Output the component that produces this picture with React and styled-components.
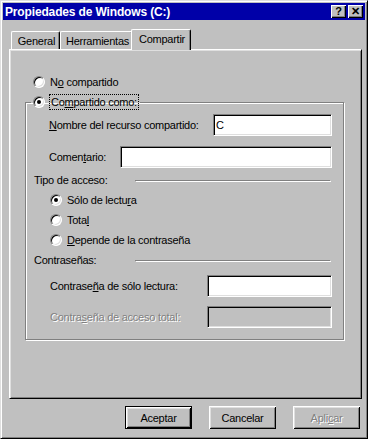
import React from "react";
import styled, { createGlobalStyle } from "styled-components";

const GlobalStyle = createGlobalStyle`
  body {
    margin: 0;
    background: #c0c0c0;
    font-family: "Liberation Sans", Arial, sans-serif;
    font-size: 11px;
    letter-spacing: -0.25px;
    color: #000;
  }
`;

const Window = styled.div`
  width: 368px;
  height: 439px;
  box-sizing: border-box;
  background: #c0c0c0;
  border: 1px solid;
  border-color: #dfdfdf #000 #000 #dfdfdf;
  box-shadow: inset 1px 1px #fff, inset -1px -1px #808080;
  padding: 2px;
  display: flex;
  flex-direction: column;
`;

const TitleBar = styled.div`
  height: 17px;
  background: #0000a8;
  display: flex;
  align-items: center;
  padding: 0 2px 0 2px;
  flex-shrink: 0;
`;

const Title = styled.div`
  flex: 1;
  color: #fff;
  font-weight: bold;
  font-size: 12px;
  letter-spacing: -0.15px;
`;

const CaptionButton = styled.div`
  width: 15px;
  height: 13px;
  box-sizing: border-box;
  background: #c0c0c0;
  box-shadow: inset 1px 1px #fff, inset -1px -1px #000, inset -2px -2px #808080;
  display: flex;
  align-items: center;
  justify-content: center;
  margin-left: ${p => p.gap || 0}px;
  font-weight: bold;
  font-size: 11px;
  letter-spacing: 0;
  line-height: 1;
`;

const Body = styled.div`
  flex: 1;
  display: flex;
  flex-direction: column;
  padding: 9px 3px 7px 6px;
`;

const TabRow = styled.div`
  display: flex;
  align-items: flex-end;
  height: 20px;
  padding-left: 2px;
`;

const Tab = styled.div`
  position: relative;
  z-index: ${p => (p.active ? 1 : 0)};
  width: ${p => p.w}px;
  height: ${p => (p.active ? 21 : 18)}px;
  margin: 0 ${p => (p.active ? -2 : 0)}px ${p => (p.active ? -1 : 0)}px;
  padding: ${p => (p.active ? "0 0 3px 2px" : "0 0 0 2px")};
  box-sizing: border-box;
  background: #c0c0c0;
  border-top: 1px solid #fff;
  border-left: 1px solid #fff;
  border-right: 1px solid #000;
  border-radius: 2px 2px 0 0;
  box-shadow: inset -1px 0 #808080;
  display: flex;
  align-items: center;
  justify-content: center;
`;

const Panel = styled.div`
  flex: 1;
  border: 1px solid;
  border-color: #fff #000 #000 #fff;
  box-shadow: inset 1px 1px #dfdfdf, inset -1px -1px #808080;
  padding: 24px 17px 0 15px;
  display: flex;
  flex-direction: column;
`;

const RadioRow = styled.label`
  display: flex;
  align-items: center;
  height: ${p => p.h || 16}px;
  padding-left: ${p => p.indent || 0}px;
  gap: 5px;
`;

const RadioCircle = styled.span`
  width: 12px;
  height: 12px;
  box-sizing: border-box;
  border-radius: 50%;
  background: #fff;
  border: 1px solid;
  border-color: #808080 #fff #fff #808080;
  box-shadow: inset 1px 1px #000, inset -1px -1px #dfdfdf;
  display: flex;
  align-items: center;
  justify-content: center;
  flex-shrink: 0;

  &::after {
    content: "";
    display: ${p => (p.checked ? "block" : "none")};
    width: 4px;
    height: 4px;
    border-radius: 50%;
    background: #000;
  }
`;

const FocusText = styled.span`
  padding: 0 1px;
  line-height: 14px;
  outline: 1px dotted #000;
  outline-offset: 0;
`;

const Key = styled.span`
  text-decoration: underline;
`;

const GroupBox = styled.fieldset`
  margin: 4px 0 0 0;
  padding: 0;
  border: 1px solid #808080;
  box-shadow: inset 1px 1px #fff, 1px 1px #fff;
  min-inline-size: 0;
`;

const Legend = styled.legend`
  margin-left: 5px;
  padding: 0 2px;
  height: 16px;
`;

const GroupContent = styled.div`
  display: flex;
  flex-direction: column;
  padding: 4px 11px 11px 8px;
`;

const FieldRow = styled.div`
  display: flex;
  align-items: center;
  justify-content: space-between;
  height: 22px;
  margin-top: ${p => p.top || 0}px;
  padding-left: ${p => p.indent || 15}px;
`;

const FieldLabel = styled.span`
  color: ${p => (p.disabled ? "#808080" : "#000")};
  text-shadow: ${p => (p.disabled ? "1px 1px 0 #fff" : "none")};
`;

const TextBox = styled.div`
  width: ${p => p.w}px;
  height: 22px;
  box-sizing: border-box;
  background: ${p => (p.disabled ? "#c0c0c0" : "#fff")};
  border: 1px solid;
  border-color: #808080 #fff #fff #808080;
  box-shadow: inset 1px 1px #000, inset -1px -1px #dfdfdf;
  padding: 0 2px;
  display: flex;
  align-items: center;
`;

const SectionHeader = styled.div`
  display: grid;
  grid-template-columns: 101px 1fr;
  align-items: center;
  height: 14px;
  margin-top: ${p => p.top || 0}px;
`;

const Etch = styled.div`
  height: 1px;
  background: #808080;
  box-shadow: 1px 1px #fff;
  margin-right: 2px;
`;

const RadioList = styled.div`
  display: flex;
  flex-direction: column;
  margin-top: 3px;
`;

const ButtonRow = styled.div`
  display: flex;
  justify-content: flex-end;
  gap: 17px;
  margin-top: 7px;
  padding-right: 2px;
`;

const Button = styled.div`
  width: 67px;
  height: 23px;
  box-sizing: border-box;
  display: flex;
  align-items: center;
  justify-content: center;
  border: ${p => (p.primary ? "1px solid #000" : "none")};
  box-shadow: inset 1px 1px #fff, inset -1px -1px #000, inset 2px 2px #dfdfdf, inset -2px -2px #808080;
  color: ${p => (p.disabled ? "#808080" : "#000")};
  text-shadow: ${p => (p.disabled ? "1px 1px 0 #fff" : "none")};
`;

const Radio = ({ checked, children, indent, h }) => (
  <RadioRow indent={indent} h={h}>
    <RadioCircle checked={checked} />
    {children}
  </RadioRow>
);

const App = () => {
  return (
    <>
      <GlobalStyle />
      <Window>
        <TitleBar>
          <Title>Propiedades de Windows (C:)</Title>
          <CaptionButton>?</CaptionButton>
          <CaptionButton gap={2}>✕</CaptionButton>
        </TitleBar>
        <Body>
          <TabRow>
            <Tab w={49}>General</Tab>
            <Tab w={73}>Herramientas</Tab>
            <Tab w={60} active>Compartir</Tab>
          </TabRow>
          <Panel>
            <Radio indent={8}>
              <span>N<Key>o</Key> compartido</span>
            </Radio>
            <GroupBox>
              <Legend>
                <Radio checked>
                  <FocusText>Co<Key>m</Key>partido como:</FocusText>
                </Radio>
              </Legend>
              <GroupContent>
                <FieldRow>
                  <FieldLabel><Key>N</Key>ombre del recurso compartido:</FieldLabel>
                  <TextBox w={119}>C</TextBox>
                </FieldRow>
                <FieldRow top={10}>
                  <FieldLabel>Comen<Key>t</Key>ario:</FieldLabel>
                  <TextBox w={212} />
                </FieldRow>
                <SectionHeader top={5}>
                  <span>Tipo de acceso:</span>
                  <Etch />
                </SectionHeader>
                <RadioList>
                  <Radio checked indent={16} h={20}>
                    <span>Sólo de lectu<Key>r</Key>a</span>
                  </Radio>
                  <Radio indent={16} h={20}>
                    <span>Tota<Key>l</Key></span>
                  </Radio>
                  <Radio indent={16} h={20}>
                    <span><Key>D</Key>epende de la contraseña</span>
                  </Radio>
                </RadioList>
                <SectionHeader top={3}>
                  <span>Contraseñas:</span>
                  <Etch />
                </SectionHeader>
                <FieldRow top={8} indent={16}>
                  <FieldLabel>Contrase<Key>ñ</Key>a de sólo lectura:</FieldLabel>
                  <TextBox w={125} />
                </FieldRow>
                <FieldRow top={9} indent={16}>
                  <FieldLabel disabled>Contra<Key>s</Key>eña de acceso total:</FieldLabel>
                  <TextBox w={125} disabled />
                </FieldRow>
              </GroupContent>
            </GroupBox>
          </Panel>
          <ButtonRow>
            <Button primary>Aceptar</Button>
            <Button>Cancelar</Button>
            <Button disabled>Apli<Key>c</Key>ar</Button>
          </ButtonRow>
        </Body>
      </Window>
    </>
  );
};

export default App;
